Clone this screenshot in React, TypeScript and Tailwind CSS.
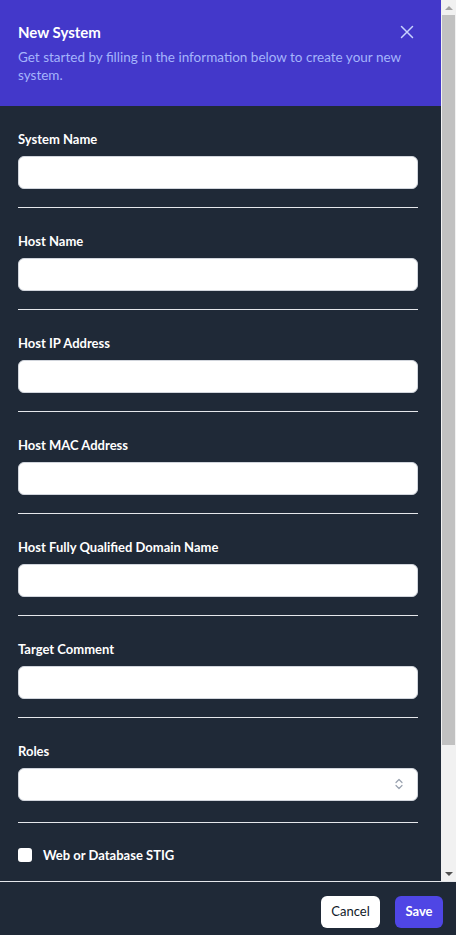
import React from "react";

function Field({ label }: { label: string }) {
  return (
    <div>
      <label className="block text-[13px] leading-5 font-bold text-white">{label}</label>
      <input
        type="text"
        className="mt-[7px] block h-[33px] w-full rounded-md border border-gray-300 bg-white px-3 text-sm text-gray-900 outline-none"
      />
      <div className="mt-[18px] mb-[23px] h-px bg-gray-200" />
    </div>
  );
}

function FakeScrollbar() {
  return (
    <div className="flex w-[15px] shrink-0 flex-col bg-[#f1f1f1]">
      <div className="flex h-[15px] items-center justify-center">
        <span className="h-0 w-0 border-x-[4px] border-b-[4px] border-x-transparent border-b-[#a3a3a3]" />
      </div>
      <div className="ml-[1px] mr-px h-[730px] bg-[#c1c1c1]" />
      <div className="flex-1" />
      <div className="flex h-[15px] items-center justify-center">
        <span className="h-0 w-0 border-x-[4px] border-t-[4px] border-x-transparent border-t-[#505050]" />
      </div>
    </div>
  );
}

export default function App() {
  const fields = [
    "System Name",
    "Host Name",
    "Host IP Address",
    "Host MAC Address",
    "Host Fully Qualified Domain Name",
    "Target Comment",
  ];
  return (
    <div className="flex h-[935px] flex-col bg-[#1f2937] font-['Lato',sans-serif]">
      <div className="flex min-h-0 flex-1">
        <div className="min-w-0 flex-1 overflow-hidden">
          <div className="h-[106px] bg-[#4338ca] pl-[18px] pr-[22px] pt-5">
            <div className="flex items-center justify-between">
              <h2 className="text-[15px] leading-6 font-bold text-white">New System</h2>
              <button className="flex h-6 w-6 items-center justify-center text-[#c7d2fe]">
                <svg viewBox="0 0 24 24" className="h-6 w-6" fill="none" stroke="currentColor" strokeWidth={1.5}>
                  <path d="M6.5 17.5L17.5 6.5M6.5 6.5l11 11" strokeLinecap="round" />
                </svg>
              </button>
            </div>
            <p className="mt-1 text-[13.5px] leading-[18px] text-[#a5b4fc]">
              Get started by filling in the information below to create your new system.
            </p>
          </div>
          <div className="pl-[18px] pt-[23px] pr-[23px]">
            {fields.map((f) => (
              <Field key={f} label={f} />
            ))}
            <div>
              <label className="block text-[13px] leading-5 font-bold text-white">Roles</label>
              <div className="relative mt-[7px] h-[33px] w-full rounded-md border border-gray-300 bg-white">
                <svg
                  viewBox="0 0 16 16"
                  className="absolute right-[10px] top-[7px] h-4 w-4 text-gray-400"
                  fill="none"
                  stroke="currentColor"
                  strokeWidth={1.2}
                >
                  <path d="M5 6.5L8 3.5L11 6.5M5 9.5L8 12.5L11 9.5" strokeLinecap="round" strokeLinejoin="round" />
                </svg>
              </div>
              <div className="mt-[21px] h-px bg-gray-200" />
            </div>
            <div className="mt-[22px] flex items-center">
              <span className="h-[14px] w-[14px] rounded-[3px] bg-white" />
              <span className="ml-[11px] text-[13px] leading-5 font-bold text-white">Web or Database STIG</span>
            </div>
          </div>
        </div>
        <FakeScrollbar />
      </div>
      <div className="flex h-[54px] shrink-0 justify-end gap-[15px] border-t border-gray-200 pr-[13px] pt-[14px]">
        <button className="h-[32px] w-[59px] rounded-md bg-white text-[13px] text-gray-900">Cancel</button>
        <button className="h-[32px] w-[48px] rounded-md bg-[#4f46e5] text-[13px] font-bold text-white">Save</button>
      </div>
    </div>
  );
}
